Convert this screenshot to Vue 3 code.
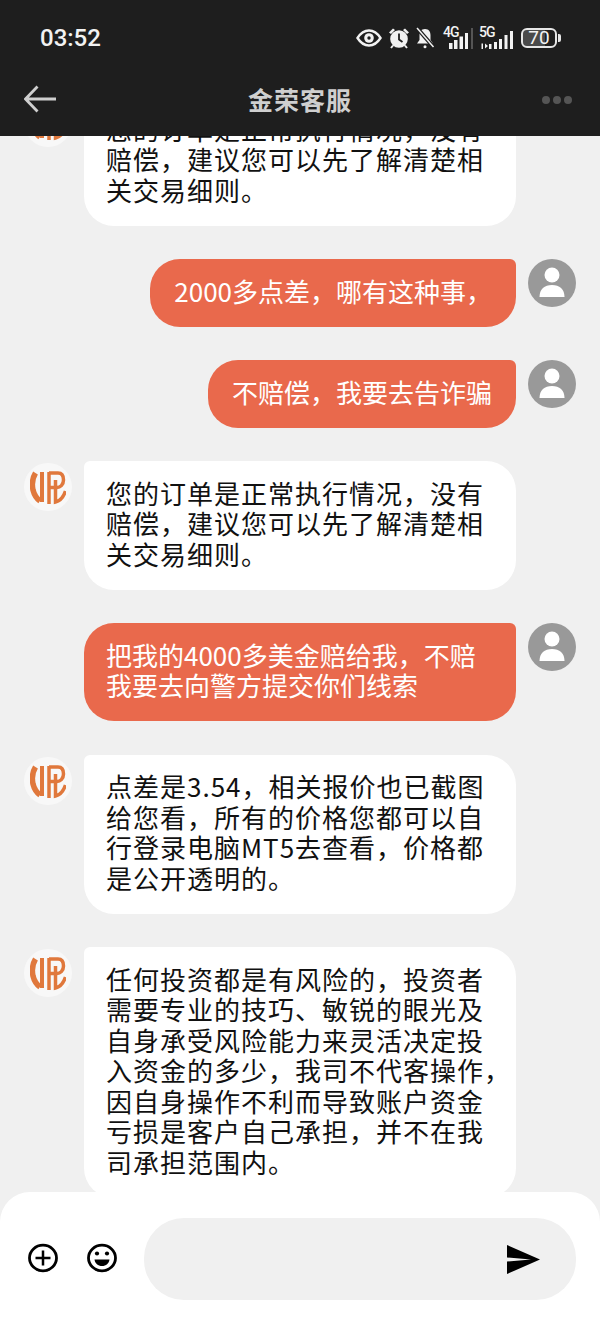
<script setup>
const orderLines = ['您的订单是正常执行情况，没有', '赔偿，建议您可以先了解清楚相', '关交易细则。']
const rows = [
  { id: 1, side: 'in', lines: orderLines },
  { id: 2, side: 'out', lines: ['2000多点差，哪有这种事，'] },
  { id: 3, side: 'out', lines: ['不赔偿，我要去告诈骗'] },
  { id: 4, side: 'in', lines: orderLines },
  { id: 5, side: 'out', lines: ['把我的4000多美金赔给我，不赔', '我要去向警方提交你们线索'] },
  { id: 6, side: 'in', lines: ['点差是3.54，相关报价也已截图', '给您看，所有的价格您都可以自', '行登录电脑MT5去查看，价格都', '是公开透明的。'] },
  { id: 7, side: 'in', lines: ['任何投资都是有风险的，投资者', '需要专业的技巧、敏锐的眼光及', '自身承受风险能力来灵活决定投', '入资金的多少，我司不代客操作，', '因自身操作不利而导致账户资金', '亏损是客户自己承担，并不在我', '司承担范围内。'] }
]
</script>

<template>
  <div class="phone">
    <header class="top">
      <div class="status">
        <span class="time">03:52</span>
        <div class="sys">
          <svg class="eye" width="26" height="18" viewBox="0 0 26 18"><path d="M1.500 9C5 3.500 9 1.500 13 1.500S21 3.500 24.500 9C21 14.500 17 16.500 13 16.500S5 14.500 1.500 9Z" fill="none" stroke="#f2f2f2" stroke-width="2.400"/><circle cx="13" cy="9" r="4.800" fill="#f2f2f2"/><circle cx="13" cy="9" r="1.700" fill="#1e1e1e"/></svg>
          <svg class="clock" width="22" height="22" viewBox="0 0 22 22"><circle cx="11" cy="12" r="8.800" fill="#f2f2f2"/><path d="M11 6.500V12.500L14.500 15" fill="none" stroke="#1e1e1e" stroke-width="1.800"/><path d="M1 5.500 5 1.500 7 3 3 7ZM21 5.500 17 1.500 15 3 19 7Z" fill="#f2f2f2"/><path d="M5 18.500 3 21M17 18.500 19 21" stroke="#f2f2f2" stroke-width="2"/></svg>
          <svg class="bell" width="20" height="22" viewBox="0 0 20 22"><path d="M10 2C6 2 4.500 5 4.500 8V13L2 16.500H18L15.500 13V8C15.500 5 14 2 10 2Z" fill="#f2f2f2"/><circle cx="10" cy="19.800" r="1.500" fill="#f2f2f2"/><path d="M2 1 18.500 20" stroke="#1e1e1e" stroke-width="4"/><path d="M2 1 18.500 20" stroke="#f2f2f2" stroke-width="1.500"/></svg>
          <div class="net four">
            <span class="gen">4G</span>
            <svg width="19" height="16" viewBox="0 0 19 16"><path d="M0 10H3.500V16H0ZM5 7H8.500V16H5ZM10.500 3.500H14V16H10.500ZM16 0H19V16H16Z" fill="#f2f2f2"/></svg>
            <i class="sep"></i>
          </div>
          <div class="net five">
            <span class="gen">5G</span>
            <svg width="34" height="20" viewBox="0 0 34 20"><path d="M2.500 14.500V20H4V14.500ZM6 14.500 9 17 6 19.500ZM10 15H12.500V20H10ZM15 13H18V20H15ZM20 10H23V20H20ZM25.500 6H28.500V20H25.500ZM31 2H34V20H31Z" fill="#f2f2f2"/></svg>
          </div>
          <div class="batt">
            <span class="cell">70</span>
            <i class="nub"></i>
          </div>
        </div>
      </div>
      <div class="nav">
        <svg class="back" width="32" height="28" viewBox="0 0 32 28"><path d="M13.500 1.500 1.500 14 13.500 26.500M1.500 14H32" fill="none" stroke="#cfcfcf" stroke-width="2.800"/></svg>
        <h1>金荣客服</h1>
        <div class="more"><i></i><i></i><i></i></div>
      </div>
    </header>

    <main class="chat">
      <div v-for="m in rows" :key="m.id" class="row" :class="m.side">
        <div v-if="m.side === 'in'" class="ava brand">
          <svg width="36" height="36" viewBox="0 0 36 36" fill="none" stroke="#e0783c">
            <path d="M5.500 4C2.500 9 1.500 14 3 21C4 25 6 29 10 32" stroke-width="5.500"/>
            <path d="M12 3V33" stroke-width="4"/>
            <path d="M19 3V35" stroke-width="3.500"/>
            <path d="M19 4H28C32 4 33.500 7 33.500 11C33.500 16 30 18.500 27 18.500H19" stroke-width="3.500"/>
            <path d="M25.500 11V33C30 32 33.500 28 35.500 22" stroke-width="3.500"/>
          </svg>
        </div>
        <div class="bubble" :class="{ multi: m.side === 'out' && m.lines.length > 1 }">
          <div v-for="(l, i) in m.lines" :key="i" class="line">{{ l }}</div>
        </div>
        <div v-if="m.side === 'out'" class="ava user">
          <svg width="48" height="48" viewBox="0 0 48 48"><circle cx="24" cy="16" r="7.500" fill="#fff"/><path d="M11.500 38C11.500 30 16.500 26 24 26S36.500 30 36.500 38Z" fill="#fff"/></svg>
        </div>
      </div>
    </main>

    <footer class="bar">
      <svg class="tool plus" width="32" height="32" viewBox="0 0 32 32"><ellipse cx="16" cy="16" rx="13.500" ry="12.800" fill="none" stroke="#000" stroke-width="2.800"/><path d="M16 8.500V23.500M8.500 16H23.500" stroke="#000" stroke-width="2.500"/></svg>
      <svg class="tool face" width="32" height="32" viewBox="0 0 32 32"><ellipse cx="16" cy="16" rx="13.500" ry="12.800" fill="none" stroke="#000" stroke-width="2.800"/><circle cx="11" cy="11.500" r="2.100"/><circle cx="21" cy="11.500" r="2.100"/><path d="M8.500 17.500H23.500C23 21.500 20 24 16 24S9 21.500 8.500 17.500Z"/></svg>
      <div class="field">
        <svg width="33" height="29" viewBox="0 0 33 29"><path d="M0 0 33 14.500 0 29V16.500L24 14.500 0 12.500Z"/></svg>
      </div>
    </footer>
  </div>
</template>

<style>
html, body { margin: 0; padding: 0; }
</style>

<style scoped>
.phone {
  width: 600px;
  height: 1326px;
  display: flex;
  flex-direction: column;
  overflow: hidden;
  background: #f0f0f0;
  font-family: "Noto Sans CJK SC", "Noto Sans", sans-serif;
}
.top {
  position: relative;
  z-index: 2;
  height: 136px;
  flex: none;
  background: #1e1e1e;
}
.status {
  height: 76px;
  box-sizing: border-box;
  padding: 20px 39px 0 40px;
  display: flex;
  justify-content: space-between;
  align-items: flex-start;
}
.time {
  font: 500 24px/36px Roboto, sans-serif;
  color: #f2f2f2;
}
.sys {
  display: flex;
  align-items: center;
  height: 36px;
  color: #f2f2f2;
}
.clock { margin-left: 6px; }
.bell { margin-left: 5px; }
.net {
  position: relative;
  display: flex;
  height: 22px;
  justify-content: flex-end;
  align-items: flex-end;
}
.net svg { display: block; }
.four { width: 25px; margin-left: 8px; }
.five { width: 34px; margin-left: 11px; }
.gen {
  position: absolute;
  left: 0;
  top: -2px;
  font: 500 14px/14px Roboto, sans-serif;
  letter-spacing: -1px;
}
.sep {
  position: absolute;
  right: -5px;
  bottom: 0;
  width: 2px;
  height: 21px;
  background: #555;
}
.batt {
  display: flex;
  align-items: center;
  gap: 1px;
  margin-left: 8px;
}
.cell {
  width: 36px;
  height: 20px;
  box-sizing: border-box;
  border: 2px solid #e6e6e6;
  border-radius: 6px;
  background: linear-gradient(90deg, #4a4a4a 70%, #1e1e1e 70%);
  color: #f2f2f2;
  font: 400 19px/16px Roboto, sans-serif;
  text-align: center;
}
.nub {
  width: 3px;
  height: 8px;
  border-radius: 0 2px 2px 0;
  background: #e6e6e6;
}
.nav {
  height: 48px;
  padding: 0 28px 0 24px;
  display: flex;
  align-items: center;
  justify-content: space-between;
}
.nav .back { margin-top: -2px; }
.nav h1 {
  margin: -2px 0 0 2px;
  font-size: 25px;
  font-weight: 700;
  color: #cfcfcf;
  letter-spacing: 1px;
  line-height: 48px;
}
.more { display: flex; gap: 3px; }
.more i {
  width: 8px;
  height: 8px;
  border-radius: 50%;
  background: #555;
}
.chat {
  flex: 1;
  min-height: 0;
  overflow: hidden;
  display: flex;
  flex-direction: column;
  justify-content: flex-end;
  gap: 33.500px;
  padding: 0 24px;
  margin-bottom: -5.500px;
}
.row {
  display: flex;
  flex: none;
  align-items: flex-start;
  gap: 12px;
}
.row.out { justify-content: flex-end; }
.ava {
  flex: none;
  width: 48px;
  height: 48px;
  border-radius: 50%;
  display: flex;
  align-items: center;
  justify-content: center;
}
.brand { background: #f8f8f8; margin-top: 2px; }
.user { background: #999; margin-top: -0.500px; }
.bubble {
  box-sizing: border-box;
  padding: 16.500px 24px 20.500px;
  font-size: 26px;
  line-height: 30.500px;
  color: #111;
}
.line { white-space: nowrap; }
.in .bubble {
  width: 432px;
  padding-left: 22px;
  padding-right: 22px;
  letter-spacing: 1px;
  background: #fff;
  border-radius: 6px 30px 30px 30px;
}
.out .bubble {
  background: #e9694c;
  color: #fff;
  border-radius: 30px 6px 30px 30px;
}
.out .bubble.multi {
  width: 432px;
  padding-left: 22px;
}
.bar {
  position: relative;
  z-index: 2;
  flex: none;
  height: 134px;
  box-sizing: border-box;
  background: #fff;
  border-radius: 30px 30px 0 0;
  padding: 26px 24px 26px 27px;
  display: flex;
  align-items: flex-start;
}
.tool { margin-top: 24px; flex: none; }
.plus { margin-right: 27px; }
.face { margin-right: 26px; }
.field {
  flex: 1;
  height: 82px;
  border-radius: 40px;
  background: #f0f0f0;
  display: flex;
  align-items: center;
  justify-content: flex-end;
  padding-right: 36px;
}
</style>
